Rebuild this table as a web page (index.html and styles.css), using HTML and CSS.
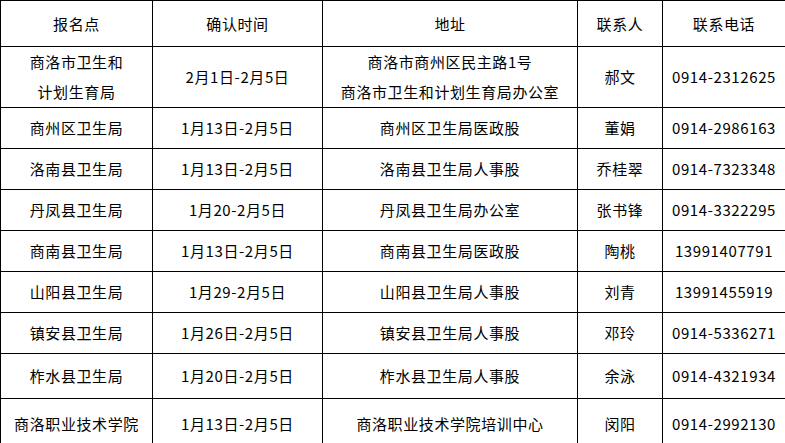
FILE: index.html
```html
<!DOCTYPE html>
<html lang="zh">
<head>
<meta charset="utf-8">
<link rel="stylesheet" href="styles.css">
</head>
<body>
<table class="sheet">
  <colgroup>
    <col class="c1"><col class="c2"><col class="c3"><col class="c4"><col class="c5">
  </colgroup>
  <tr class="head"><td>报名点</td><td>确认时间</td><td>地址</td><td>联系人</td><td>联系电话</td></tr>
  <tr class="tall"><td>商洛市卫生和<br>计划生育局</td><td>2月1日-2月5日</td><td>商洛市商州区民主路1号<br>商洛市卫生和计划生育局办公室</td><td>郝文</td><td>0914-2312625</td></tr>
  <tr><td>商州区卫生局</td><td>1月13日-2月5日</td><td>商州区卫生局医政股</td><td>董娟</td><td>0914-2986163</td></tr>
  <tr><td>洛南县卫生局</td><td>1月13日-2月5日</td><td>洛南县卫生局人事股</td><td>乔桂翠</td><td>0914-7323348</td></tr>
  <tr><td>丹凤县卫生局</td><td>1月20-2月5日</td><td>丹凤县卫生局办公室</td><td>张书锋</td><td>0914-3322295</td></tr>
  <tr><td>商南县卫生局</td><td>1月13日-2月5日</td><td>商南县卫生局医政股</td><td>陶桃</td><td>13991407791</td></tr>
  <tr><td>山阳县卫生局</td><td>1月29-2月5日</td><td>山阳县卫生局人事股</td><td>刘青</td><td>13991455919</td></tr>
  <tr><td>镇安县卫生局</td><td>1月26日-2月5日</td><td>镇安县卫生局人事股</td><td>邓玲</td><td>0914-5336271</td></tr>
  <tr class="r45"><td>柞水县卫生局</td><td>1月20日-2月5日</td><td>柞水县卫生局人事股</td><td>余泳</td><td>0914-4321934</td></tr>
  <tr class="last"><td>商洛职业技术学院</td><td>1月13日-2月5日</td><td>商洛职业技术学院培训中心</td><td>闵阳</td><td>0914-2992130</td></tr>
</table>
</body>
</html>
```

FILE: styles.css
```css
html, body {
  margin: 0;
  padding: 0;
  background: #ffffff;
  overflow: hidden;
}
.sheet {
  border-collapse: collapse;
  table-layout: fixed;
  width: 785px;
  font-family: "Noto Sans CJK SC", "Noto Sans", sans-serif;
  font-size: 15px;
  letter-spacing: 0.6px;
  color: #000;
}
.c1 { width: 152px; }
.c2 { width: 170px; }
.c3 { width: 255px; }
.c4 { width: 85px; }
.c5 { width: 123px; }
.sheet td {
  border: 1px solid #000;
  text-align: center;
  vertical-align: middle;
  padding: 0;
  line-height: 30px;
  height: 40px;
  white-space: nowrap;
}
.sheet tr.head td { height: 45px; }
.sheet tr.tall td { height: 60px; }
.sheet tr.r45 td { height: 44px; }
.sheet tr.last td { height: 49px; }
```
